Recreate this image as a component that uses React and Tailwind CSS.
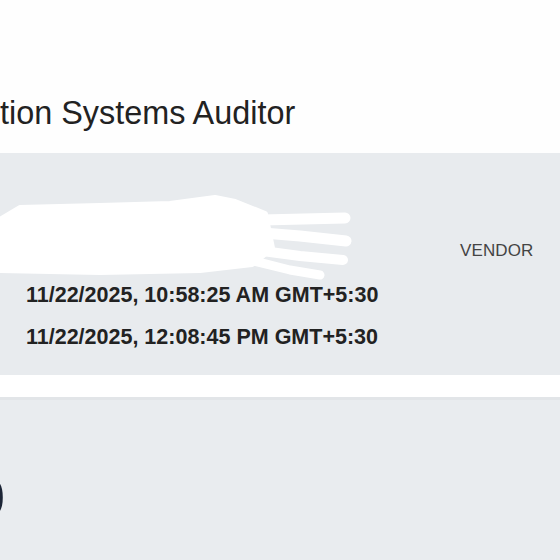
export default function App() {
  return (
    <div className="w-[560px] h-[560px] overflow-hidden bg-white" style={{ fontFamily: '"Liberation Sans", Arial, sans-serif' }}>
      <div className="h-[153px] pt-[95px] bg-[#fefefe]">
        <div className="text-[32.4px] leading-[36px] text-[#222222] whitespace-nowrap">tion Systems Auditor</div>
      </div>
      <div className="h-[222px] bg-[#e8ebee] pt-[37px] relative">
        <div className="flex h-[93px]">
          <svg width="360" height="93" viewBox="0 0 360 93" className="shrink-0">
            <g fill="#ffffff" stroke="#ffffff" strokeLinecap="round" strokeLinejoin="round">
              <polygon points="0,30 20,18 100,16 170,14 215,8 235,12 265,24 272,58 252,74 200,80 100,82 0,80" strokeWidth="6" />
            </g>
            <g fill="none" stroke="#ffffff" strokeLinecap="round" strokeLinejoin="round">
              <path d="M225 22 L262 30 L345 28" strokeWidth="11" />
              <path d="M250 42 L300 46 L346 51" strokeWidth="11" />
              <path d="M255 60 L300 66 L343 70" strokeWidth="10" />
              <path d="M250 70 L290 80 L320 85" strokeWidth="9" />
            </g>
          </svg>
          <div className="ml-[100px] mt-[51px] text-[17px] leading-[20px] text-[#444444] tracking-[0.1px]">VENDOR</div>
        </div>
        <div className="pl-[26px] flex flex-col gap-[18px] font-bold text-[21.5px] leading-[24px] text-[#222222] whitespace-nowrap">
          <div>11/22/2025, 10:58:25 AM GMT+5:30</div>
          <div>11/22/2025, 12:08:45 PM GMT+5:30</div>
        </div>
      </div>
      <div className="h-[22px] bg-white" />
      <div className="h-[163px] bg-[#e9ecef] border-t-[3px] border-[#e2e5e8] pt-[67px]">
        <div className="ml-[-25px] text-[54px] leading-[60px] font-bold text-[#1c2536]">0</div>
      </div>
    </div>
  );
}
